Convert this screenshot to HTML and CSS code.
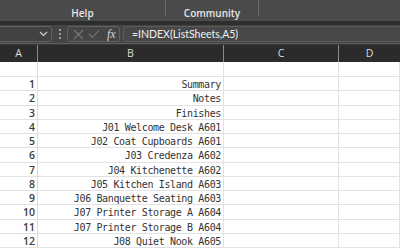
FILE: index.html
```html
<!DOCTYPE html>
<html lang="en">
<head>
    <meta charset="UTF-8">
    <title>Excel - ListSheets</title>
    <link rel="stylesheet" href="styles.css">
</head>
<body>
    <div class="ribbon">
        <div class="group group-help">Help</div>
        <div class="group group-community">Community</div>
        <div class="group group-rest"></div>
    </div>
    <div class="divider"></div>

    <div class="formula-bar">
        <div class="name-box">
            <svg width="9" height="6" viewBox="0 0 9 6"><path d="M1 1 L4.5 4.5 L8 1" fill="none" stroke="#cfcfcf" stroke-width="1.2"/></svg>
        </div>
        <div class="grip"><span></span><span></span><span></span></div>
        <div class="fx-buttons">
            <svg width="11" height="11" viewBox="0 0 11 11"><path d="M1 1 L10 10 M10 1 L1 10" stroke="#777" stroke-width="1.1"/></svg>
            <svg width="12" height="10" viewBox="0 0 12 10"><path d="M1 5 L4.5 8.5 L11 1.5" fill="none" stroke="#777" stroke-width="1.1"/></svg>
            <span class="fx">fx</span>
        </div>
        <div class="formula-input">=INDEX(ListSheets,A5)</div>
    </div>

    <div class="sheet">
        <div class="col-head corner">A</div>
        <div class="col-head col-b">B</div>
        <div class="col-head col-c">C</div>
        <div class="col-head col-d">D</div>

        <div class="row-num"></div><div class="cell"></div><div class="cell"></div><div class="cell"></div>
        <div class="row-num">1</div><div class="cell">Summary</div><div class="cell"></div><div class="cell"></div>
        <div class="row-num">2</div><div class="cell">Notes</div><div class="cell"></div><div class="cell"></div>
        <div class="row-num">3</div><div class="cell">Finishes</div><div class="cell"></div><div class="cell"></div>
        <div class="row-num">4</div><div class="cell">J01 Welcome Desk A601</div><div class="cell"></div><div class="cell"></div>
        <div class="row-num">5</div><div class="cell">J02 Coat Cupboards A601</div><div class="cell"></div><div class="cell"></div>
        <div class="row-num">6</div><div class="cell">J03 Credenza A602</div><div class="cell"></div><div class="cell"></div>
        <div class="row-num">7</div><div class="cell">J04 Kitchenette A602</div><div class="cell"></div><div class="cell"></div>
        <div class="row-num">8</div><div class="cell">J05 Kitchen Island A603</div><div class="cell"></div><div class="cell"></div>
        <div class="row-num">9</div><div class="cell">J06 Banquette Seating A603</div><div class="cell"></div><div class="cell"></div>
        <div class="row-num">10</div><div class="cell">J07 Printer Storage A A604</div><div class="cell"></div><div class="cell"></div>
        <div class="row-num">11</div><div class="cell">J07 Printer Storage B A604</div><div class="cell"></div><div class="cell"></div>
        <div class="row-num">12</div><div class="cell">J08 Quiet Nook A605</div><div class="cell"></div><div class="cell"></div>
    </div>
</body>
</html>
```

FILE: styles.css
```css
body {
    margin: 0;
    width: 400px;
    height: 250px;
    overflow: hidden;
    background: #fff;
    font-family: 'Open Sans', 'Noto Sans', sans-serif;
}

.ribbon {
    height: 21px;
    background: #4a4a4a;
    display: flex;
}

.group {
    color: #e6e6e6;
    font-size: 10px;
    font-weight: 600;
    line-height: 26px;
    border-right: 1px solid #6a6a6a;
    margin-bottom: 5px;
    text-align: center;
}

.group-help {
    width: 165px;
}

.group-community {
    width: 92px;
}

.group-rest {
    border-right: none;
}

.divider {
    height: 4px;
    background: #2e2e2e;
}

.formula-bar {
    height: 18px;
    background: #454545;
    border-bottom: 1px solid #5c5c5c;
    display: flex;
    align-items: center;
}

.name-box {
    width: 56px;
    height: 16px;
    margin-left: -4px;
    border: 1px solid #626262;
    border-radius: 3px;
    background: #424242;
    display: flex;
    align-items: center;
    justify-content: flex-end;
    padding-right: 3px;
    box-sizing: border-box;
}

.grip {
    width: 15px;
    display: flex;
    flex-direction: column;
    align-items: center;
    gap: 2px;
}

.grip span {
    width: 2px;
    height: 2px;
    background: #9a9a9a;
}

.fx-buttons {
    width: 53px;
    height: 16px;
    border: 1px solid #626262;
    border-radius: 3px;
    display: flex;
    align-items: center;
    gap: 4px;
    padding-left: 5px;
    box-sizing: border-box;
}

.fx {
    font-family: 'Liberation Serif', serif;
    font-style: italic;
    color: #d8d8d8;
    font-size: 12px;
    margin-left: 3px;
}

.formula-input {
    flex: 1;
    height: 16px;
    margin-left: 3px;
    border: 1px solid #5a5a5a;
    border-right: none;
    border-radius: 3px 0 0 3px;
    background: #484848;
    color: #f2f2f2;
    font-family: Lato, 'Open Sans', sans-serif;
    font-size: 10.5px;
    line-height: 15px;
    padding-left: 8px;
    box-sizing: border-box;
}

.sheet {
    display: grid;
    grid-template-columns: 38px 186px 115px 61px;
    grid-template-rows: 17px 15px repeat(12, 14.25px);
    border-top: 1px solid #3a3a3a;
}

.col-head {
    background: #2b2b2b;
    color: #dcdcdc;
    font-size: 10.5px;
    text-align: center;
    line-height: 17px;
    border-right: 1px solid #8a8a8a;
}

.col-d {
    border-right: none;
}

.row-num {
    font-size: 10.5px;
    font-weight: 600;
    color: #3d3d3d;
    text-align: right;
    padding-right: 2px;
    border-right: 1px solid #dcdcdc;
    border-bottom: 1px solid #e2e2e2;
    line-height: 15px;
}

.cell {
    font-family: 'DejaVu Sans Mono', monospace;
    font-size: 10px;
    letter-spacing: -0.36px;
    color: #333;
    text-align: right;
    padding-right: 2px;
    border-right: 1px solid #e2e2e2;
    border-bottom: 1px solid #e2e2e2;
    line-height: 15px;
    white-space: nowrap;
}
```
